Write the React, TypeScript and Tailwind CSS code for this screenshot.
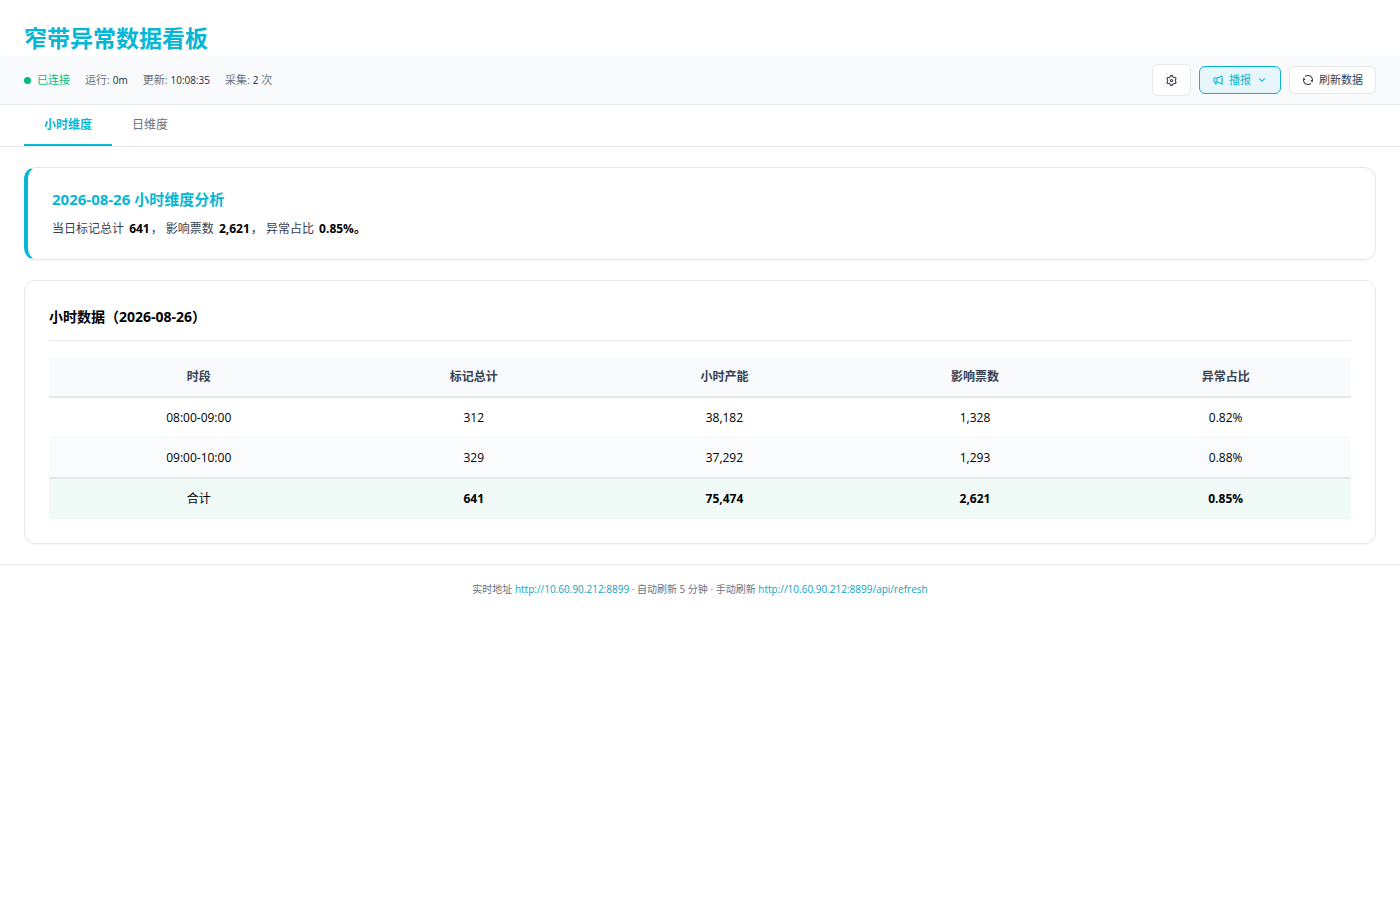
import { useState } from 'react';
import { RiArrowDownSLine, RiMegaphoneLine, RiRefreshLine, RiSettings3Line } from 'react-icons/ri';

type HourRow = {
    period: string;
    marks: string;
    capacity: string;
    tickets: string;
    ratio: string;
};

const columns = ['时段', '标记总计', '小时产能', '影响票数', '异常占比'];

const rows: HourRow[] = [
    { period: '08:00-09:00', marks: '312', capacity: '38,182', tickets: '1,328', ratio: '0.82%' },
    { period: '09:00-10:00', marks: '329', capacity: '37,292', tickets: '1,293', ratio: '0.88%' },
];

const tabs = [
    { id: 'hour', label: '小时维度' },
    { id: 'day', label: '日维度' },
];

export default function App() {
    const [tab, setTab] = useState('hour');

    return (
        <div className="font-['Open_Sans','Noto_Sans_CJK_SC',sans-serif] text-xs text-black">
            {/* Title */}
            <header className="px-6 pt-[22px] pb-0.5">
                <h1 className="text-[23px] leading-8 font-bold text-[#06b6d4]">窄带异常数据看板</h1>
            </header>

            {/* Status bar */}
            <div className="flex items-center justify-between border-b border-gray-200 bg-gray-50 px-6 py-2 text-[11px] leading-4">
                <div className="flex items-center gap-[15px] text-gray-500">
                    <span className="flex items-center gap-1.5 text-emerald-500">
                        <span className="size-[7px] rounded-full bg-emerald-500" />
                        已连接
                    </span>
                    <span>运行: <span className="text-[10px] font-medium text-gray-800">0m</span></span>
                    <span>更新: <span className="text-[10px] font-medium text-gray-800">10:08:35</span></span>
                    <span>采集: <span className="text-[10px] font-medium text-gray-800">2</span> 次</span>
                </div>
                <div className="flex items-center gap-2 text-gray-700">
                    <button aria-label="设置" className="flex h-8 w-[39px] items-center justify-center rounded-md border border-gray-200 bg-white">
                        <RiSettings3Line size={13} />
                    </button>
                    <button className="flex h-7 items-center gap-[5px] rounded-md border border-[#06b6d4] bg-[#e6f6fa] px-3 text-[#06b6d4]">
                        <RiMegaphoneLine size={12} />
                        播报
                        <RiArrowDownSLine size={12} />
                    </button>
                    <button className="flex h-7 items-center gap-[5px] rounded-md border border-gray-200 bg-white px-3">
                        <RiRefreshLine size={12} />
                        刷新数据
                    </button>
                </div>
            </div>

            {/* Tabs */}
            <nav className="flex border-b border-gray-200 px-6">
                {tabs.map((t) => (
                    <button
                        key={t.id}
                        onClick={() => setTab(t.id)}
                        className={`border-b-2 px-5 py-3 leading-[15px] ${t.id === tab ? 'border-[#06b6d4] font-bold text-[#06b6d4]' : 'border-transparent text-gray-500'}`}
                    >
                        {t.label}
                    </button>
                ))}
            </nav>

            <main className="flex flex-col gap-5 px-6 py-5">
                {/* Summary */}
                <section className="rounded-xl border border-l-4 border-gray-200 border-l-[#06b6d4] px-6 py-5 shadow-xs">
                    <h2 className="mb-2 text-[15px] leading-[23px] font-bold text-[#06b6d4]">2026-08-26 小时维度分析</h2>
                    <p className="leading-5 text-gray-700">
                        当日标记总计 <strong className="mr-px ml-0.5 text-black">641</strong>， 影响票数{' '}
                        <strong className="mr-px ml-0.5 text-black">2,621</strong>， 异常占比{' '}
                        <strong className="mr-px ml-0.5 text-black">0.85%。</strong>
                    </p>
                </section>

                {/* Hourly table */}
                <section className="rounded-xl border border-gray-200 p-6 shadow-xs">
                    <h2 className="mb-4 border-b border-gray-200 pb-3 text-sm leading-[23px] font-bold">小时数据（2026-08-26）</h2>
                    <table className="w-full table-fixed border-collapse text-center leading-[19px]">
                        <thead>
                            <tr className="border-b-2 border-gray-200 bg-gray-50 text-gray-700">
                                {columns.map((c) => (
                                    <th key={c} className="py-2.5 font-bold first:w-[23%]">{c}</th>
                                ))}
                            </tr>
                        </thead>
                        <tbody>
                            {rows.map((r) => (
                                <tr key={r.period} className="border-b border-slate-100 even:bg-[#fafbfd]">
                                    <td className="py-2.5 font-medium">{r.period}</td>
                                    <td>{r.marks}</td>
                                    <td>{r.capacity}</td>
                                    <td>{r.tickets}</td>
                                    <td>{r.ratio}</td>
                                </tr>
                            ))}
                        </tbody>
                        <tfoot>
                            <tr className="border-t-2 border-b border-t-gray-200 border-b-slate-100 bg-[#f0fbf8] font-bold">
                                <td className="py-2.5 font-normal">合计</td>
                                <td>641</td>
                                <td>75,474</td>
                                <td>2,621</td>
                                <td>0.85%</td>
                            </tr>
                        </tfoot>
                    </table>
                </section>
            </main>

            <footer className="border-t border-gray-200 px-6 py-4 text-center text-[10px] leading-4 text-gray-500">
                实时地址 <a href="http://10.60.90.212:8899" className="text-[#06a6c4]">http://10.60.90.212:8899</a> · 自动刷新 5 分钟 · 手动刷新{' '}
                <a href="http://10.60.90.212:8899/api/refresh" className="text-[#06a6c4]">http://10.60.90.212:8899/api/refresh</a>
            </footer>
        </div>
    );
}
